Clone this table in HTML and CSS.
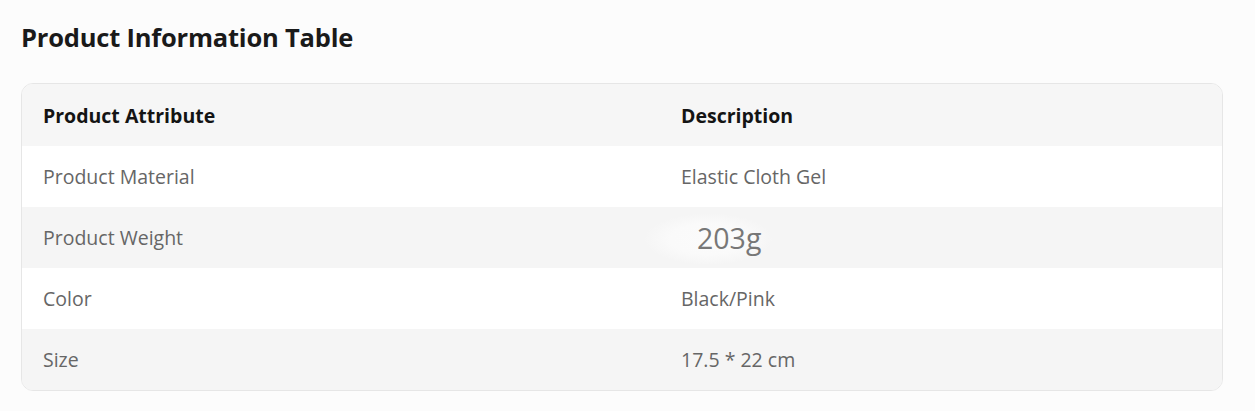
FILE: index.html
```html
<!DOCTYPE html>
<html>
<head>
<meta charset="utf-8">
<link rel="stylesheet" href="styles.css">
</head>
<body>
<div class="page">
  <h2 class="title">Product Information Table</h2>
  <div class="card">
    <table class="info">
      <thead>
        <tr><th class="c1">Product Attribute</th><th>Description</th></tr>
      </thead>
      <tbody>
        <tr><td>Product Material</td><td>Elastic Cloth Gel</td></tr>
        <tr class="alt"><td>Product Weight</td><td class="patch-cell"><span class="patch">203g</span></td></tr>
        <tr><td>Color</td><td>Black/Pink</td></tr>
        <tr class="alt"><td>Size</td><td>17.5 * 22 cm</td></tr>
      </tbody>
    </table>
  </div>
</div>
</body>
</html>
```

FILE: styles.css
```css
html, body { margin: 0; padding: 0; }
body {
  background: #fcfcfc;
  font-family: "Open Sans", "Noto Sans", sans-serif;
  width: 1255px;
  height: 411px;
  overflow: hidden;
}
.page { padding: 19px 32px 0 21px; }
.title {
  margin: 0;
  font-size: 25.5px;
  font-weight: 700;
  line-height: 36px;
  color: #1a1a1a;
  letter-spacing: -0.2px;
}
.card {
  margin-top: 28px;
  border: 1px solid #e6e6e6;
  border-radius: 12px;
  overflow: hidden;
  background: #fff;
}
.info {
  width: 100%;
  border-collapse: collapse;
}
.info th, .info td {
  text-align: left;
  padding: 0 21px;
  font-size: 19.5px;
  height: 61px;
  vertical-align: middle;
}
.info th { color: #141414; font-weight: 700; height: 62px; }
.info thead tr { background: #f6f6f6; }
.info td { color: #666; }
.info .c1 { width: 596px; }
.info tr.alt { background: #f5f5f5; }
.patch-cell { padding-left: 0 !important; }
.patch {
  display: inline-block;
  font-size: 28.5px;
  line-height: 38px;
  color: #777;
  padding: 8px 12px 8px 53px;
  margin-left: -16px;
  background: radial-gradient(closest-side at 50% 52%, #fbfbfb 0%, #fafafa 60%, rgba(245,245,245,0) 100%);
}
```
